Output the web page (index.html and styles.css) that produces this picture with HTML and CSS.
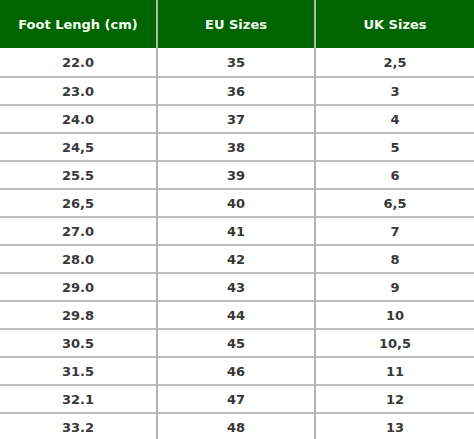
FILE: index.html
```html
<!DOCTYPE html>
<html>
<head>
<meta charset="utf-8">
<link rel="stylesheet" href="styles.css">
</head>
<body>
<table class="sizes">
<thead>
<tr><th>Foot Lengh (cm)</th><th>EU Sizes</th><th>UK Sizes</th></tr>
</thead>
<tbody>
<tr><td>22.0</td><td>35</td><td>2,5</td></tr>
<tr><td>23.0</td><td>36</td><td>3</td></tr>
<tr><td>24.0</td><td>37</td><td>4</td></tr>
<tr><td>24,5</td><td>38</td><td>5</td></tr>
<tr><td>25.5</td><td>39</td><td>6</td></tr>
<tr><td>26,5</td><td>40</td><td>6,5</td></tr>
<tr><td>27.0</td><td>41</td><td>7</td></tr>
<tr><td>28.0</td><td>42</td><td>8</td></tr>
<tr><td>29.0</td><td>43</td><td>9</td></tr>
<tr><td>29.8</td><td>44</td><td>10</td></tr>
<tr><td>30.5</td><td>45</td><td>10,5</td></tr>
<tr><td>31.5</td><td>46</td><td>11</td></tr>
<tr><td>32.1</td><td>47</td><td>12</td></tr>
<tr><td>33.2</td><td>48</td><td>13</td></tr>
</tbody>
</table>
</body>
</html>
```
FILE: styles.css
```css
html, body {
  margin: 0;
  padding: 0;
  background: #ffffff;
}
.sizes {
  width: 474px;
  border-collapse: collapse;
  table-layout: fixed;
  font-family: "DejaVu Sans", Verdana, sans-serif;
  font-size: 13px;
  font-weight: bold;
}
.sizes th {
  background: #006400;
  color: #f4fff4;
  height: 48px;
  padding: 0;
  text-align: center;
  border-left: 2px solid #b0b8b0;
}
.sizes td {
  height: 26px;
  padding: 0;
  text-align: center;
  color: #383838;
  border-top: 2px solid #bdbdbd;
  border-left: 2px solid #b4b4b4;
}
.sizes tbody tr:first-child td {
  border-top: 0;
  height: 28px;
}
.sizes th:first-child,
.sizes td:first-child {
  border-left: 0;
  width: 156px;
}
.sizes th:nth-child(2),
.sizes td:nth-child(2) {
  width: 156px;
}
```
